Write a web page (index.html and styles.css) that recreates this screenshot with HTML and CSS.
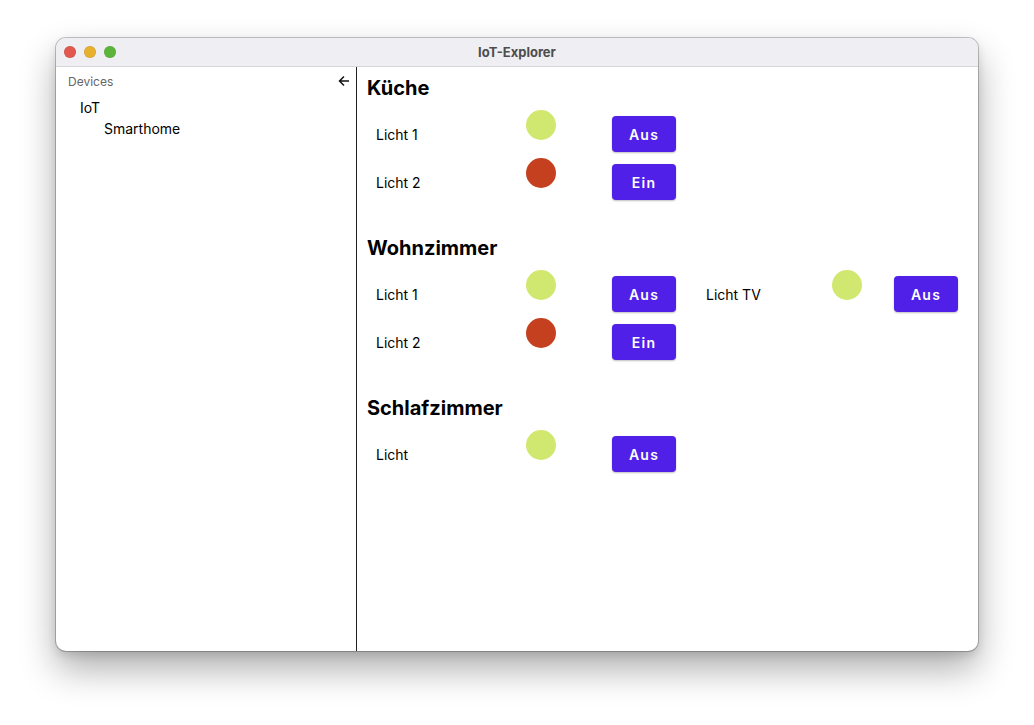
FILE: index.html
```html
<!DOCTYPE html>
<html lang="de">
<head>
<meta charset="utf-8">
<title>IoT-Explorer</title>
<link rel="stylesheet" href="styles.css">
</head>
<body>
<div class="window">
  <div class="titlebar">
    <div class="lights">
      <span class="light red"></span>
      <span class="light yellow"></span>
      <span class="light green"></span>
    </div>
    <div class="title">IoT-Explorer</div>
  </div>
  <div class="content">
    <aside class="sidebar">
      <div class="side-head">
        <span class="side-title">Devices</span>
        <svg class="back" width="12" height="12" viewBox="0 0 12 12"><path d="M11 6H1.5M6 1.5L1.5 6L6 10.5" fill="none" stroke="#111" stroke-width="1.5"/></svg>
      </div>
      <div class="tree-item lvl1">IoT</div>
      <div class="tree-item lvl2">Smarthome</div>
    </aside>
    <main class="main">
      <section class="room">
        <h2>Küche</h2>
        <div class="row">
          <div class="device"><span class="label">Licht 1</span><span class="dot on"></span><button class="btn">Aus</button></div>
        </div>
        <div class="row">
          <div class="device"><span class="label">Licht 2</span><span class="dot off"></span><button class="btn">Ein</button></div>
        </div>
      </section>
      <section class="room">
        <h2>Wohnzimmer</h2>
        <div class="row">
          <div class="device"><span class="label">Licht 1</span><span class="dot on"></span><button class="btn">Aus</button></div>
          <div class="device compact"><span class="label">Licht TV</span><span class="dot on"></span><button class="btn">Aus</button></div>
        </div>
        <div class="row">
          <div class="device"><span class="label">Licht 2</span><span class="dot off"></span><button class="btn">Ein</button></div>
        </div>
      </section>
      <section class="room">
        <h2>Schlafzimmer</h2>
        <div class="row">
          <div class="device"><span class="label">Licht</span><span class="dot on"></span><button class="btn">Aus</button></div>
        </div>
      </section>
    </main>
  </div>
</div>
</body>
</html>
```
FILE: styles.css
```css
* { box-sizing: border-box; }
html, body { margin: 0; padding: 0; background: #ffffff; }
body {
  min-height: 725px;
  padding: 38px 0 0 56px;
  font-family: Inter, "Noto Sans", sans-serif;
  color: #000;
}
.window {
  width: 922px;
  height: 613px;
  border-radius: 10px;
  background: #fff;
  overflow: hidden;
  box-shadow: 0 0 0 1px rgba(0,0,0,0.22), 0 18px 36px rgba(0,0,0,0.32), 0 4px 10px rgba(0,0,0,0.12);
  display: flex;
  flex-direction: column;
}
.titlebar {
  height: 29px;
  background: #efeef2;
  border-bottom: 1px solid #d6d6d8;
  display: flex;
  align-items: center;
  position: relative;
  flex-shrink: 0;
}
.lights { display: flex; gap: 8px; padding-left: 8px; }
.light { width: 12px; height: 12px; border-radius: 50%; display: block; }
.light.red { background: #e2574e; box-shadow: inset 0 0 0 0.5px rgba(0,0,0,0.12); }
.light.yellow { background: #e7b12e; box-shadow: inset 0 0 0 0.5px rgba(0,0,0,0.12); }
.light.green { background: #5db43b; box-shadow: inset 0 0 0 0.5px rgba(0,0,0,0.12); }
.title {
  position: absolute;
  left: 0; right: 0; top: 0; bottom: 0;
  display: flex; align-items: center; justify-content: center;
  font-size: 13px;
  font-weight: 700;
  color: #4d4d4d;
}
.content { flex: 1; display: flex; }
.sidebar {
  width: 301px;
  border-right: 1px solid #222;
  flex-shrink: 0;
}
.side-head {
  height: 30px;
  display: flex;
  align-items: center;
  justify-content: space-between;
  padding: 0 6px 2px 12px;
}
.side-title { font-size: 12px; color: #666; }
.back { display: block; }
.tree-item { font-size: 14px; line-height: 21px; }
.lvl1 { padding-left: 24px; }
.lvl2 { padding-left: 48px; }
.main { flex: 1; padding: 9px 10px 0 10px; }
.room { margin-bottom: 30px; }
.room h2 {
  margin: 0 0 10px 0;
  font-size: 20px;
  line-height: 24px;
  font-weight: 700;
}
.row { display: flex; }
.device {
  width: 330px;
  height: 48px;
  display: flex;
  align-items: center;
  padding-left: 9px;
  flex-shrink: 0;
}
.device.compact { width: 272px; }
.label { width: 150px; font-size: 14px; padding-top: 1px; flex-shrink: 0; }
.dot {
  width: 30px; height: 30px; border-radius: 50%;
  align-self: flex-start;
  display: block;
  flex-shrink: 0;
}
.dot.on { background: #d0e86f; }
.dot.off { background: #c5401f; }
.btn {
  margin-left: 56px;
  width: 64px;
  height: 36px;
  border: none;
  border-radius: 4px;
  background: #5020e9;
  color: #fff;
  font-family: Inter, "Noto Sans", sans-serif;
  font-size: 14px;
  font-weight: 600;
  letter-spacing: 1.2px;
  box-shadow: 0 1px 2px rgba(0,0,0,0.25);
  padding: 0;
  flex-shrink: 0;
}
.device.compact .label { width: 126px; }
.device.compact .btn { margin-left: 32px; }
```
